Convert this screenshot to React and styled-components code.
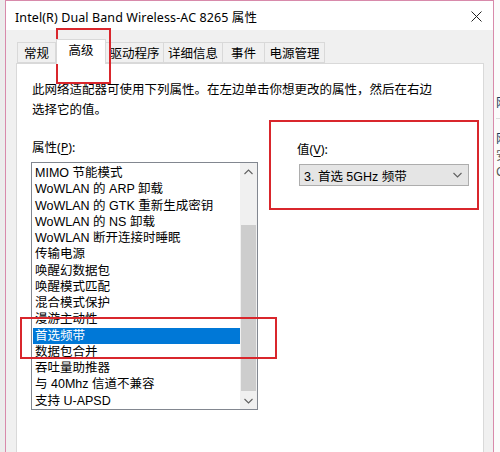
import React from "react";
import styled, { createGlobalStyle } from "styled-components";

const GlobalStyle = createGlobalStyle`
  html, body {
    margin: 0;
    padding: 0;
    background: #f3f3f3;
  }
  body {
    font-family: "Noto Sans", "Noto Sans CJK SC", sans-serif;
    color: #000;
  }
`;

const items = [
  "MIMO 节能模式",
  "WoWLAN 的 ARP 卸载",
  "WoWLAN 的 GTK 重新生成密钥",
  "WoWLAN 的 NS 卸载",
  "WoWLAN 断开连接时睡眠",
  "传输电源",
  "唤醒幻数据包",
  "唤醒模式匹配",
  "混合模式保护",
  "漫游主动性",
  "首选频带",
  "数据包合并",
  "吞吐量助推器",
  "与 40Mhz 信道不兼容",
  "支持 U-APSD",
];

// tab label + its width in px
const tabs = [
  ["常规", 39],
  ["高级", 50],
  ["驱动程序", 58],
  ["详细信息", 59],
  ["事件", 42],
  ["电源管理", 60],
];

const Chevron = ({ up }) => (
  <svg width="9" height="6" viewBox="0 0 9 6">
    <path
      d={up ? "M0.5 5 L4.5 1 L8.5 5" : "M0.5 1 L4.5 5 L8.5 1"}
      fill="none"
      stroke="#606060"
      strokeWidth="1.1"
    />
  </svg>
);

export default function App() {
  return (
    <>
      <GlobalStyle />
      <Page>
        <Desktop />
        <Window>
          <TitleBar>
            <Title>Intel(R) Dual Band Wireless-AC 8265 属性</Title>
            <Close>
              <svg width="11" height="11" viewBox="0 0 11 11">
                <path d="M0.5 0.5 L10.5 10.5 M10.5 0.5 L0.5 10.5" stroke="#222" strokeWidth="1" />
              </svg>
            </Close>
          </TitleBar>
          <Body>
            <TabRow>
              {tabs.map(([t, w]) => (
                <Tab key={t} $w={w} $active={t === "高级"}>
                  {t}
                </Tab>
              ))}
            </TabRow>
            <Panel>
              <Description>
                此网络适配器可使用下列属性。在左边单击你想更改的属性，然后在右边
                <br />
                选择它的值。
              </Description>
              <Columns>
                <LeftColumn>
                  <Label>
                    属性(<u>P</u>):
                  </Label>
                  <ListBox>
                    <ListItems>
                      {items.map((it) => (
                        <ListItem key={it} $selected={it === "首选频带"}>
                          {it}
                        </ListItem>
                      ))}
                    </ListItems>
                    <ScrollBar>
                      <ScrollButton>
                        <Chevron up />
                      </ScrollButton>
                      <ScrollTrack>
                        <ScrollThumb />
                      </ScrollTrack>
                      <ScrollButton>
                        <Chevron />
                      </ScrollButton>
                    </ScrollBar>
                  </ListBox>
                </LeftColumn>
                <RightColumn>
                  <Label>
                    值(<u>V</u>):
                  </Label>
                  <Select>
                    <span>3. 首选 5GHz 频带</span>
                    <Chevron />
                  </Select>
                </RightColumn>
              </Columns>
            </Panel>
          </Body>
        </Window>
        <BehindWindow>
          <BehindLine $top={96} $dark>网络</BehindLine>
          <BehindRule />
          <BehindLine $top={13} $dark>网络</BehindLine>
          <BehindLine $top={3}>安装</BehindLine>
          <BehindLine $top={2}>C</BehindLine>
        </BehindWindow>
        <Mark $l={56} $t={28} $w={55} $h={56} />
        <Mark $l={269} $t={120} $w={210} $h={90} />
        <Mark $l={20} $t={317} $w={257} $h={42} />
      </Page>
    </>
  );
}

const Page = styled.div`
  position: relative;
  width: 500px;
  height: 452px;
  overflow: hidden;
  display: flex;
`;

const Desktop = styled.div`
  width: 5px;
  flex: none;
  background: #ececec;
`;

const Window = styled.div`
  width: 487px;
  flex: none;
  display: flex;
  flex-direction: column;
  border: 1px solid #d88aab;
  border-bottom: none;
  background: #f0f0f0;
`;

const TitleBar = styled.div`
  height: 29px;
  background: #fff;
  display: flex;
  align-items: center;
  justify-content: space-between;
  padding: 0 11px 0 9px;
`;

const Title = styled.div`
  font-size: 12.5px;
  letter-spacing: 0.1px;
  margin-top: 1px;
`;

const Close = styled.div`
  display: flex;
  align-items: center;
  margin-top: 2px;
`;

const Body = styled.div`
  flex: 1;
  display: flex;
  flex-direction: column;
  padding: 0 9px 0 10px;
`;

const TabRow = styled.div`
  display: flex;
  align-items: flex-end;
  height: 33px;
  padding-left: 1px;
`;

const Tab = styled.div`
  box-sizing: border-box;
  width: ${(p) => p.$w}px;
  text-align: center;
  font-size: 12.5px;
  height: ${(p) => (p.$active ? "25px" : "21px")};
  line-height: ${(p) => (p.$active ? "22px" : "21px")};
  margin-bottom: ${(p) => (p.$active ? "-1px" : "0")};
  background: ${(p) => (p.$active ? "#fff" : "#f0f0f0")};
  border: 1px solid #d9d9d9;
  border-bottom: ${(p) => (p.$active ? "none" : "1px solid #d9d9d9")};
  border-left: ${(p) => (p.$active ? "1px solid #d9d9d9" : "none")};
  position: relative;
  z-index: ${(p) => (p.$active ? 1 : 0)};
  &:first-child {
    border-left: 1px solid #d9d9d9;
  }
`;

const Panel = styled.div`
  flex: 1;
  background: #fff;
  border: 1px solid #d9d9d9;
  border-bottom: none;
  padding: 16px 14px 0 14px;
`;

const Description = styled.p`
  margin: 0;
  padding-left: 1px;
  font-size: 12.5px;
  line-height: 20px;
  white-space: nowrap;
`;

const Columns = styled.div`
  display: flex;
  margin-top: 19px;
`;

const LeftColumn = styled.div`
  width: 227px;
  display: flex;
  flex-direction: column;
`;

const RightColumn = styled.div`
  margin-left: 38px;
  display: flex;
  flex-direction: column;
  padding-top: 2px;
`;

const Label = styled.div`
  font-size: 12.5px;
  line-height: 17px;
  height: 17px;
  padding-left: 1px;
  margin-bottom: 6px;
  u {
    text-underline-offset: 2px;
  }
`;

const ListBox = styled.div`
  height: 246px;
  border: 1px solid #828790;
  display: flex;
  background: #fff;
`;

const ListItems = styled.div`
  flex: 1;
  padding: 2px 0 0 1px;
  overflow: hidden;
`;

const ListItem = styled.div`
  font-family: "Liberation Sans", "Noto Sans CJK SC", sans-serif;
  font-size: 12.5px;
  height: 16.25px;
  line-height: 16px;
  padding-left: 2px;
  white-space: nowrap;
  background: ${(p) => (p.$selected ? "#0078d7" : "transparent")};
  color: ${(p) => (p.$selected ? "#fff" : "#000")};
`;

const ScrollBar = styled.div`
  width: 17px;
  display: flex;
  flex-direction: column;
  background: #f0f0f0;
`;

const ScrollButton = styled.div`
  height: 17px;
  display: flex;
  align-items: center;
  justify-content: center;
`;

const ScrollTrack = styled.div`
  flex: 1;
  display: flex;
  flex-direction: column;
  justify-content: flex-end;
  padding: 0 1px 1px;
`;

const ScrollThumb = styled.div`
  height: 166px;
  background: #cdcdcd;
`;

const Select = styled.div`
  box-sizing: border-box;
  width: 170px;
  height: 22px;
  margin-left: 3px;
  border: 1px solid #adadad;
  background: #e5e5e5;
  display: flex;
  align-items: center;
  justify-content: space-between;
  padding: 0 6px 0 4px;
  font-family: "Liberation Sans", "Noto Sans CJK SC", sans-serif;
  font-size: 12.5px;
`;

const BehindWindow = styled.div`
  flex: 1;
  background: #fbfbfb;
  display: flex;
  flex-direction: column;
  padding-left: 2px;
  font-size: 12px;
  line-height: 14px;
  white-space: nowrap;
`;

const BehindLine = styled.div`
  margin-top: ${(p) => p.$top}px;
  color: ${(p) => (p.$dark ? "#1e3a5a" : "#555")};
`;

const BehindRule = styled.div`
  height: 1px;
  background: #ddd;
  margin-top: 8px;
`;

const Mark = styled.div`
  position: absolute;
  left: ${(p) => p.$l}px;
  top: ${(p) => p.$t}px;
  width: ${(p) => p.$w}px;
  height: ${(p) => p.$h}px;
  border: 2px solid #d9262c;
  box-sizing: border-box;
  pointer-events: none;
`;
